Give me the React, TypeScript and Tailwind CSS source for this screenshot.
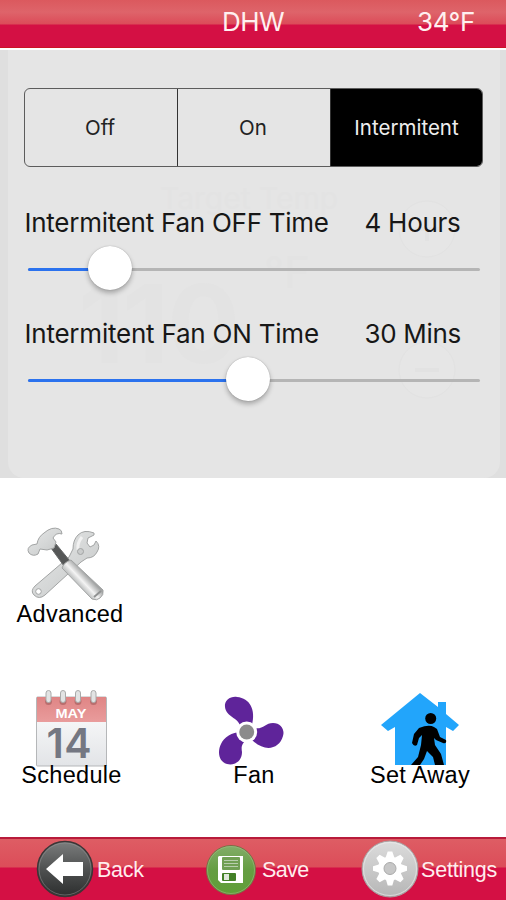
import type { ReactNode } from 'react';

const modes = ['Off', 'On', 'Intermitent'];

function Slider({ value }: { value: number }) {
  return (
    <div className="relative ml-[28px] mr-[26px] h-[44px]">
      <div className="absolute inset-x-0 top-[22px] h-[3px] rounded-full bg-[#b5b5b5]" />
      <div
        className="absolute left-0 top-[22px] h-[3px] rounded-full bg-[#2b72ee]"
        style={{ width: value }}
      />
      <div
        className="absolute top-0 -ml-[22px] size-[44px] rounded-full bg-white shadow-[0_3px_5px_rgba(0,0,0,0.28),0_0_1px_rgba(0,0,0,0.35)]"
        style={{ left: value }}
      />
    </div>
  );
}

function ToolsIcon() {
  return (
    <svg width="78" height="76" viewBox="0 0 78 76">
      <defs>
        <linearGradient id="steel" x1="0" y1="0" x2="1" y2="1">
          <stop offset="0" stopColor="#e6e7e7" />
          <stop offset="0.5" stopColor="#d6d8d8" />
          <stop offset="1" stopColor="#c2c4c4" />
        </linearGradient>
        <linearGradient id="grip" x1="0.4" y1="0.6" x2="0.62" y2="0.4">
          <stop offset="0" stopColor="#c5c7c7" />
          <stop offset="0.4" stopColor="#f4f4f4" />
          <stop offset="1" stopColor="#a2a4a4" />
        </linearGradient>
      </defs>
      <g stroke="#a2a4a4" strokeWidth="1" strokeLinejoin="round">
        <path
          d="M43 31 L47 23 Q47 14 52 9 Q58 3 68 7 L68 9 L62 12 L61 17 L64 21 L68 19 L70 15 Q75 20 71 26 Q68 32 61 32 L55 36 L19 69 Q13 74 8 69 Q4 65 9 60Z"
          fill="url(#steel)"
        />
        <path d="M52 24 Q51 17 56 11" fill="none" stroke="#f2f2f2" strokeWidth="3" />
        <circle cx="54.500" cy="25.500" r="3" fill="#cacccc" />
        <circle cx="12.500" cy="65.500" r="2.800" fill="#fff" />
        <path d="M25 22 L30 18 L44 35 L38 40Z" fill="#555757" stroke="#656767" />
        <path
          d="M36 42 Q38 36 45 34 L77 64 Q78 69 74 72 Q71 75 66 73Z"
          fill="url(#grip)"
        />
        <path d="M68 71 L75 65" stroke="#909292" strokeWidth="2" />
        <path
          d="M3 27 Q0 22 6 19 L11 18 Q12 11 18 7 Q26 0 33 3 Q36 4 36 8 Q30 6 27 12 L30 16 L28 22 L21 24 L14 23 L12 28 Q7 31 3 27Z"
          fill="url(#steel)"
        />
      </g>
    </svg>
  );
}

function CalendarIcon() {
  return (
    <svg width="74" height="78" viewBox="0 0 74 78">
      <defs>
        <linearGradient id="paper" x1="0" y1="0" x2="0" y2="1">
          <stop offset="0" stopColor="#fff" />
          <stop offset="1" stopColor="#e2e4e7" />
        </linearGradient>
        <linearGradient id="banner" x1="0" y1="0" x2="0" y2="1">
          <stop offset="0" stopColor="#df8585" />
          <stop offset="1" stopColor="#e99c9c" />
        </linearGradient>
      </defs>
      <rect x="1.500" y="7" width="70" height="69" rx="1" fill="url(#paper)" stroke="#b5b7b9" />
      <path d="M2 7H71V32H2Z" fill="url(#banner)" />
      {[13.5, 28, 43, 58.5].map((x) => (
        <g key={x}>
          <circle cx={x} cy="11.500" r="3.500" fill="#b96e6e" />
          <rect x={x - 2.5} y="0.500" width="5" height="12" rx="2.500" fill="#e2e3e3" stroke="#aaa" />
        </g>
      ))}
      <text
        x="36"
        y="28"
        textAnchor="middle"
        textLength="31"
        lengthAdjust="spacingAndGlyphs"
        fontSize="13.5"
        fontWeight="700"
        fill="#fff"
        className="font-['Liberation_Sans',sans-serif]"
      >
        MAY
      </text>
      <text
        x="34"
        y="67.500"
        textAnchor="middle"
        textLength="45"
        fontSize="41"
        fontWeight="600"
        fill="#747782"
        className="font-[Inter,sans-serif]"
      >
        14
      </text>
    </svg>
  );
}

function FanIcon() {
  return (
    <svg width="68" height="72" viewBox="0 0 68 72">
      <g fill="#5f249a">
        <path d="M22 31 C21 23 8 22 7 12 C6 5 13 1 19 2 C32 3 38 15 34 30Z" />
        <path d="M36 33 C45 35 47 28 55 28 C63 28 67 35 65 41 C61 55 46 57 34 45Z" />
        <path d="M23 37 C14 37 6 42 3 49 C-1 57 1 67 9 69 C18 71 24 65 24 57 C23 51 24 49 29 44Z" />
      </g>
      <circle cx="28.700" cy="37" r="10.500" fill="#fff" />
      <circle cx="28.700" cy="37" r="7.500" fill="#8b8b8b" />
    </svg>
  );
}

function HouseIcon() {
  return (
    <svg width="80" height="74" viewBox="0 0 80 74">
      <path
        d="M40 1 L58 15 V10 H66 V22 L79 33 L73 39 L66 35 V73 H15 V35 L8 39 L1 33Z"
        fill="#22a5fb"
      />
      <circle cx="50.700" cy="26.500" r="5.500" />
      <path
        d="M39 36 Q49 32 54 35 L57 37 L60 45 L66 48 Q67 52 63 51 L56 48 L54 46 L55 53 L61 62 L64 73 H55 L53 65 L47 59 L44 67 L40 73 H31 L38 65 L41 53 L42 43 L39 46 L37 53 Q34 55 32 51 L34 42Z"
      />
    </svg>
  );
}

function BackIcon() {
  return (
    <svg width="58" height="58" viewBox="0 0 58 58">
      <defs>
        <linearGradient id="dark" x1="0" y1="0" x2="0" y2="1">
          <stop offset="0" stopColor="#7b7d7d" />
          <stop offset="0.500" stopColor="#4f5151" />
          <stop offset="1" stopColor="#2c2e2e" />
        </linearGradient>
      </defs>
      <circle cx="29" cy="29" r="27.500" fill="url(#dark)" stroke="#3b3536" strokeWidth="1.500" />
      <circle cx="29" cy="29" r="26" fill="none" stroke="#969898" strokeOpacity="0.500" />
      <path d="M10 29 L27 14 V22 H47 V36 H27 V44Z" fill="#fff" />
    </svg>
  );
}

function SaveIcon() {
  return (
    <svg width="52" height="52" viewBox="0 0 52 52">
      <defs>
        <linearGradient id="green" x1="0" y1="0" x2="0" y2="1">
          <stop offset="0" stopColor="#83ad69" />
          <stop offset="0.500" stopColor="#659d42" />
          <stop offset="1" stopColor="#609f38" />
        </linearGradient>
      </defs>
      <circle cx="26" cy="26" r="24.500" fill="url(#green)" stroke="#7e6c45" />
      <circle cx="26" cy="26" r="23.500" fill="none" stroke="#a4c28c" strokeOpacity="0.500" />
      <path d="M14 12H38V39H16L13 36V13Z" fill="#fff" />
      <rect x="17" y="13" width="18" height="13" rx="1" fill="#719f54" />
      <path d="M19 16.500H33M19 19.500H33M19 22.500H33" stroke="#b9ceae" />
      <rect x="17" y="29" width="14" height="8" rx="1" fill="#438026" />
      <rect x="19" y="30" width="5" height="6" fill="#dfe8da" />
    </svg>
  );
}

function SettingsIcon() {
  return (
    <svg width="58" height="60" viewBox="0 0 58 60">
      <defs>
        <linearGradient id="silver" x1="0" y1="0" x2="0" y2="1">
          <stop offset="0" stopColor="#dcdcdc" />
          <stop offset="1" stopColor="#b6b6b6" />
        </linearGradient>
      </defs>
      <circle cx="29" cy="30" r="28" fill="url(#silver)" stroke="#a99fa0" />
      <circle cx="29" cy="30" r="26.500" fill="none" stroke="#eee" strokeOpacity="0.600" />
      <g fill="#fff">
        {[0, 45, 90, 135].map((deg) => (
          <path
            key={deg}
            d="M26.700 12.500 H31.300 L33.500 19 V39 L31.300 46.500 H26.700 L24.500 39 V19Z"
            transform={`rotate(${deg} 29 29.500)`}
          />
        ))}
        <circle cx="29" cy="29.500" r="12" />
      </g>
      <circle cx="29" cy="29.500" r="6" fill="#c7c7c7" stroke="#aaa" />
    </svg>
  );
}

type TileProps = { label: string; children: ReactNode; className: string };

function Tile({ label, children, className }: TileProps) {
  return (
    <button className={`flex flex-col ${className}`}>
      {children}
      <span className="w-full whitespace-nowrap text-center text-[23.5px] leading-[28px] tracking-[0.3px]">
        {label}
      </span>
    </button>
  );
}

// Thermostat screen that shows faintly through the fan panel
function Backdrop() {
  return (
    <div className="absolute inset-0 text-[#e3e3e3]" aria-hidden="true">
      <span className="absolute left-[160px] top-[130px] text-[30px] leading-[36px]">Target Temp</span>
      <span className="absolute left-[78px] top-[220px] text-[108px] font-bold leading-[108px] tracking-[-2px]">110</span>
      <span className="absolute left-[264px] top-[198px] text-[44px] leading-[48px]">°F</span>
      <svg className="absolute left-[397px] top-[149px]" width="60" height="202" viewBox="0 0 60 202">
        <g fill="#e6e6e6" stroke="#e2e2e2">
          <circle cx="30" cy="30" r="28" />
          <circle cx="30" cy="171" r="28" />
        </g>
        <path d="M30 18V42M18 30H42M18 171H42" stroke="#e2e2e2" strokeWidth="4" />
      </svg>
    </div>
  );
}

export default function App() {
  return (
    <div className="flex h-[900px] w-[506px] flex-col overflow-hidden bg-white font-['Liberation_Sans',Arial,sans-serif] text-black">
      <header className="grid h-[48px] shrink-0 grid-cols-[1fr_90px_1fr] items-center border-b border-[#cb1425] bg-[linear-gradient(#db595e_0,#de646a_12px,#dc4b59_24px,#d41044_25px,#d41044_100%)] font-[Inter,sans-serif] text-[26px] leading-[40px] text-[#fff0f0]">
        <h1 className="col-start-2 pb-[3px] text-center tracking-[-0.5px]">DHW</h1>
        <span className="pb-[3px] pr-[31px] text-right tracking-[-0.4px]">34°F</span>
      </header>

      <main className="relative mt-[2px] h-[428px] shrink-0 bg-[#dfdfdf] font-[Inter,sans-serif]">
        <div className="absolute inset-y-0 left-[8px] right-[6px] rounded-b-[16px] bg-[#e5e5e5]" />
        <Backdrop />
        <div className="relative pt-[38px]">
          <div className="ml-[24px] grid h-[79px] w-[459px] grid-cols-[153px_153px_1fr] overflow-hidden rounded-[6px] border border-[#5c5c5c] text-[20.5px]">
            {modes.map((mode) => (
              <button
                key={mode}
                className={
                  mode === 'Intermitent'
                    ? 'bg-black pt-[2px] text-[#eee]'
                    : 'border-r border-[#333] pr-[2px] pt-[2px] text-[#222]'
                }
              >
                {mode}
              </button>
            ))}
          </div>
          <div className="mt-[37px] flex h-[36px] items-center text-[26px] tracking-[-0.26px] text-[#171717]">
            <span className="w-[341px] pl-[24.5px]">Intermitent Fan OFF Time</span>
            <span className="pl-[23.5px]">4 Hours</span>
          </div>
          <div className="mt-[6px]">
            <Slider value={82} />
          </div>
          <div className="mt-[25px] flex h-[36px] items-center text-[26px] tracking-[-0.22px] text-[#171717]">
            <span className="w-[341px] pl-[24.5px]">Intermitent Fan ON Time</span>
            <span className="pl-[23.5px] tracking-[-0.32px]">30 Mins</span>
          </div>
          <div className="mt-[6px]">
            <Slider value={220} />
          </div>
        </div>
      </main>

      <nav className="flex-1 pt-[48px]">
        <div className="flex h-[163px]">
          <Tile label="Advanced" className="ml-[16px] w-[108px] [&>svg]:-mb-[2px] [&>svg]:ml-[10px]">
            <ToolsIcon />
          </Tile>
        </div>
        <div className="flex h-[110px] items-start">
          <Tile label="Schedule" className="ml-[21px] mt-[1px] w-[101px] [&>svg]:-mb-[7px] [&>svg]:ml-[14px]">
            <CalendarIcon />
          </Tile>
          <Tile label="Fan" className="ml-[97px] mt-[6px] w-[70px] [&>svg]:-mb-[6px] [&>svg]:-ml-[1px]">
            <FanIcon />
          </Tile>
          <Tile label="Set Away" className="ml-[80px] mt-[3px] w-[102px] [&>svg]:-mb-[5px] [&>svg]:ml-[11px]">
            <HouseIcon />
          </Tile>
        </div>
      </nav>

      <footer className="flex h-[63px] shrink-0 items-center border-t-2 border-[#b81b3b] bg-[linear-gradient(#de5d64_0,#dc4d59_28px,#d41044_29px,#d41044_100%)] text-[21.5px] text-[#ffeded]">
        <button className="flex w-[169px] items-center gap-[3px] pb-[2px] pl-[36px] tracking-[-0.3px]">
          <BackIcon />
          <span className="pt-[3px]">Back</span>
        </button>
        <button className="flex w-[155px] items-center gap-[5px] pl-[36px] tracking-[-0.6px]">
          <SaveIcon />
          <span className="pt-[1px]">Save</span>
        </button>
        <button className="flex items-center gap-[2px] pb-[2px] pl-[37px] tracking-[-0.2px]">
          <SettingsIcon />
          <span className="pt-[3px]">Settings</span>
        </button>
      </footer>
    </div>
  );
}
